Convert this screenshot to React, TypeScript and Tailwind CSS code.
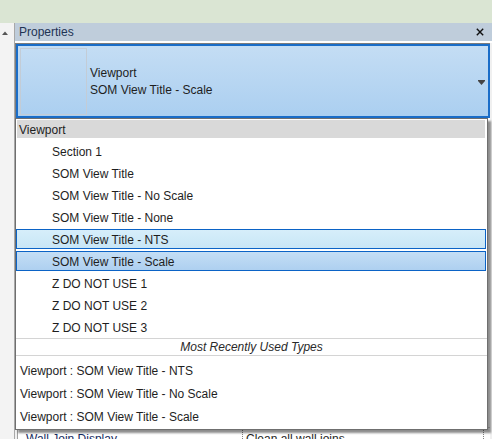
import React from "react";

const font = { fontFamily: '"Segoe UI", "Liberation Sans", Arial, sans-serif' };

const typeItems = [
  "Section 1",
  "SOM View Title",
  "SOM View Title - No Scale",
  "SOM View Title - None",
  "SOM View Title - NTS",
  "SOM View Title - Scale",
  "Z DO NOT USE 1",
  "Z DO NOT USE 2",
  "Z DO NOT USE 3",
];

const recent = [
  "Viewport : SOM View Title - NTS",
  "Viewport : SOM View Title - No Scale",
  "Viewport : SOM View Title - Scale",
];

function TypeRow({ label }: { label: string }) {
  if (label === "SOM View Title - NTS") {
    return (
      <div className="h-[22px] py-px pr-px">
        <div className="h-full border border-[#0b63c6] bg-gradient-to-b from-[#d6eefa] to-[#c8e6f6] pl-[35px] pt-px flex items-center">
          {label}
        </div>
      </div>
    );
  }
  if (label === "SOM View Title - Scale") {
    return (
      <div className="h-[22px] py-px pr-px">
        <div className="h-full border border-[#0b63c6] bg-gradient-to-b from-[#c4def5] to-[#aed0f0] pl-[35px] pt-px flex items-center">
          {label}
        </div>
      </div>
    );
  }
  return <div className="h-[22px] pl-[36px] pt-px flex items-center">{label}</div>;
}

export default function App() {
  return (
    <div
      className="relative w-[492px] h-[439px] overflow-hidden bg-[#dae5d3] text-[12px] text-[#1e1e1e]"
      style={font}
    >
      <div className="h-[23px]" />
      <div className="flex h-[416px]">
        {/* left docked panel edge */}
        <div className="w-[15px] bg-[#f3f3f3] border-r border-[#a8a8a8] relative">
          <svg className="absolute left-[2px] top-[8px]" width="6" height="4" viewBox="0 0 6 4">
            <path d="M0 4 L3 0.5 L6 4 Z" fill="#555" />
          </svg>
        </div>

        {/* properties panel */}
        <div className="flex-1 flex flex-col bg-[#f0f0f0]">
          <div className="h-[18px] bg-[#bfcddb] flex items-center justify-between pl-[4px] pr-[8px]">
            <span className="text-[12px] text-[#1e3354]">Properties</span>
            <svg width="8" height="8" viewBox="0 0 8 8">
              <path d="M0.8 0.8 L7.2 7.2 M7.2 0.8 L0.8 7.2" stroke="#111" strokeWidth="1.4" />
            </svg>
          </div>
          <div className="h-[2px] bg-white" />

          {/* type selector */}
          <div className="border-t border-l border-[#7c7c7c] mr-[2px]">
            <div className="h-[74px] border-2 border-[#1a6dc8] bg-gradient-to-b from-[#c4ddf4] to-[#abcff0] flex items-center relative">
              <div className="ml-[2px] w-[67px] h-[67px] border border-[#c3ccd6]" />
              <div className="ml-[3px] flex flex-col leading-[17px] pt-[2px]">
                <span>Viewport</span>
                <span>SOM View Title - Scale</span>
              </div>
              <svg className="absolute right-[3px] top-[34px]" width="7" height="5" viewBox="0 0 7 5">
                <path d="M0 0.5 H7" stroke="#444" strokeWidth="1" />
                <path d="M0 1 L7 1 L3.5 5 Z" fill="#444" />
              </svg>
            </div>
          </div>

          {/* property grid (mostly covered by dropdown) */}
          <div className="flex-1 bg-white ml-[2px] mr-[2px] border-l border-[#a0a0a0] flex flex-col justify-end overflow-hidden">
            <div className="h-[22px] -mb-[10px] flex border-t border-[#d0d0d0]">
              <div className="w-[225px] pl-[8px] flex items-center text-[#152a60] border-r border-dotted border-[#808080]">
                Wall Join Display
              </div>
              <div className="w-[241px] pl-[3px] flex items-center border-r border-dotted border-[#808080]">
                Clean all wall joins
              </div>
            </div>
          </div>
        </div>
      </div>

      {/* dropdown list overlay */}
      <div className="absolute left-[15px] top-[118px] w-[473px] h-[312px] bg-white border border-[#6f6f6f] shadow-[3px_3px_2px_rgba(0,0,0,0.45)] flex flex-col">
        <div className="mt-px ml-px mr-[2px] h-[18px] bg-[#d9d9d9] pl-[2px] pt-px flex items-center">Viewport</div>
        <div className="mt-[2px]">
          {typeItems.map((t) => (
            <TypeRow key={t} label={t} />
          ))}
        </div>
        <div className="border-t border-b border-[#d4d4d4] h-[18px] flex items-center justify-center italic text-[#2a2a2a]">
          Most Recently Used Types
        </div>
        <div className="pt-[3px]">
          {recent.map((r) => (
            <div key={r} className="h-[23px] pl-[4px] flex items-center">
              {r}
            </div>
          ))}
        </div>
      </div>
    </div>
  );
}
